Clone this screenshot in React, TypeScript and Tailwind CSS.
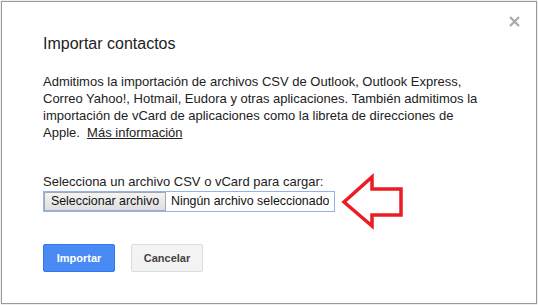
import React from "react";

function Arrow() {
  return (
    <svg width="66" height="58" viewBox="0 0 66 58" className="absolute left-[340px] top-[172px]">
      <path
        d="M4 30 L32 5 L32 17 L61 17 L61 43 L32 43 L32 54 Z"
        fill="none"
        stroke="#ec1c24"
        strokeWidth="3.5"
        strokeLinejoin="miter"
      />
    </svg>
  );
}

export default function App() {
  return (
    <div className="relative h-[305px] w-[538px] bg-white font-['Liberation_Sans',Arial,sans-serif]">
      <div className="absolute inset-x-px top-px bottom-[1px] border border-[#9a9a9a] shadow-[0_0_1px_rgba(0,0,0,0.4)]" />
      <div className="relative flex h-full flex-col px-[43px] pt-[34px]">
        <button className="absolute right-[18px] top-[16px] text-[#a8a8a8]">
          <svg width="11" height="11" viewBox="0 0 11 11">
            <path d="M1 1 L10 10 M10 1 L1 10" stroke="currentColor" strokeWidth="2.2" />
          </svg>
        </button>
        <h1 className="text-[16px] leading-[20px] text-[#222]">Importar contactos</h1>
        <p className="mt-[19px] whitespace-nowrap text-[13px] leading-[17px] text-[#222]">
          Admitimos la importación de archivos CSV de Outlook, Outlook Express,
          <br />
          Correo Yahoo!, Hotmail, Eudora y otras aplicaciones. También admitimos la
          <br />
          importación de vCard de aplicaciones como la libreta de direcciones de
          <br />
          Apple.&nbsp;{" "}
          <a className="cursor-pointer underline">Más información</a>
        </p>
        <div className="mt-[33px] text-[13px] leading-[16px] text-[#222]">
          Selecciona un archivo CSV o vCard para cargar:
        </div>
        <div className="mt-px flex h-[21px] w-[292px] items-stretch border border-[#8fb4ee] text-[12.4px] text-[#111]">
          <div className="flex w-[122px] shrink-0 items-center justify-center whitespace-nowrap border border-[#a9a9a9] bg-gradient-to-b from-[#f4f4f4] to-[#dedede]">
            Seleccionar archivo
          </div>
          <div className="flex items-center overflow-hidden whitespace-nowrap pl-[5px]">Ningún archivo seleccionado</div>
        </div>
        <div className="mt-[32px] flex gap-[16px]">
          <button className="h-[28px] w-[72px] rounded-[2px] border border-[#3079ed] bg-[#4a8af4] text-[11px] font-bold text-white">
            Importar
          </button>
          <button className="h-[28px] w-[72px] rounded-[2px] border border-[#dcdcdc] bg-[#f3f3f3] text-[11px] font-bold text-[#444]">
            Cancelar
          </button>
        </div>
      </div>
      <Arrow />
    </div>
  );
}
